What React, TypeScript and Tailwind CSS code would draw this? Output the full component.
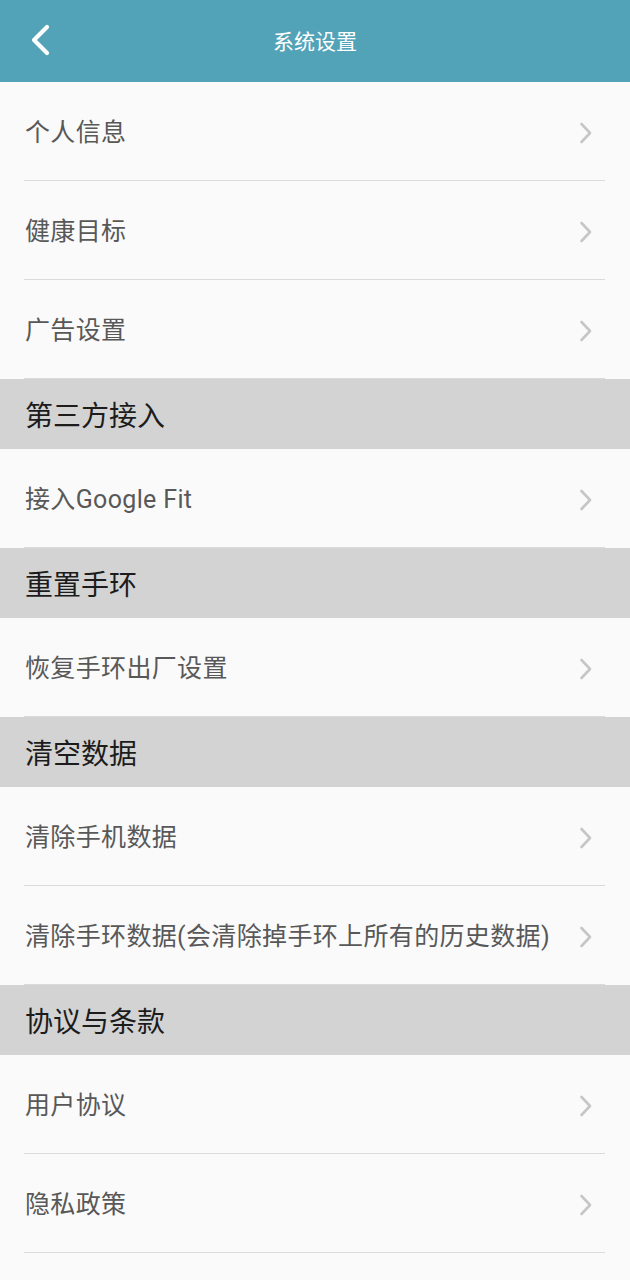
const groups: { title?: string; items: string[] }[] = [
  { items: ["个人信息", "健康目标", "广告设置"] },
  { title: "第三方接入", items: ["接入Google Fit"] },
  { title: "重置手环", items: ["恢复手环出厂设置"] },
  { title: "清空数据", items: ["清除手机数据", "清除手环数据(会清除掉手环上所有的历史数据)"] },
  { title: "协议与条款", items: ["用户协议", "隐私政策"] },
];

function Chevron() {
  return (
    <svg width="14" height="22" viewBox="0 0 14 22" className="mr-[12px] shrink-0">
      <path d="M2.5 2 L11 11 L2.5 20" fill="none" stroke="#c6c6c6" strokeWidth="2.6" strokeLinecap="round" strokeLinejoin="round" />
    </svg>
  );
}

export default function App() {
  return (
    <div className="min-h-[1280px] w-[630px] bg-[#fafafa] font-['Roboto','Noto_Sans_CJK_SC',sans-serif]">
      {/* header */}
      <header className="relative flex h-[82px] items-center justify-center bg-[#53a3b8] pt-[3px]">
        <svg width="24" height="34" viewBox="0 0 24 34" className="absolute left-[28px] top-[23px]">
          <path d="M19 4 L6 17 L19 30" fill="none" stroke="#fff" strokeWidth="4.2" strokeLinecap="round" strokeLinejoin="round" />
        </svg>
        <h1 className="text-[21px] text-white">系统设置</h1>
      </header>

      {groups.map((g, i) => (
        <section key={i}>
          {g.title && (
            <div className="flex h-[70px] items-center bg-[#d3d3d3] px-[25px] pt-[6px] text-[28px] text-[#1c1c1c]">
              {g.title}
            </div>
          )}
          {g.items.map((item) => (
            <div key={item} className="pl-[24px] pr-[25px]">
              <div className="flex h-[99px] items-center justify-between border-b border-[#dadada] pl-[1px] pt-[4px]">
                <span className="text-[25px] tracking-[0.35px] text-[#585858]">{item}</span>
                <Chevron />
              </div>
            </div>
          ))}
        </section>
      ))}
    </div>
  );
}
